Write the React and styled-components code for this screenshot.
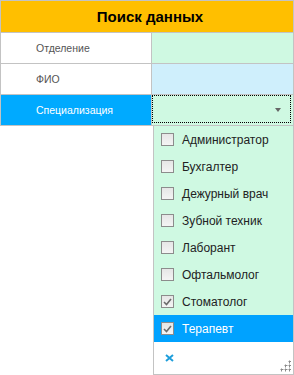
import React from "react";
import styled, { createGlobalStyle } from "styled-components";

const GlobalStyle = createGlobalStyle`
  html, body {
    margin: 0;
    padding: 0;
    background: #ffffff;
    font-family: "Liberation Sans", Arial, sans-serif;
  }
`;

const Page = styled.div`
  position: relative;
  width: 294px;
  height: 375px;
  overflow: hidden;
  background: #ffffff;
`;

const Form = styled.div`
  display: flex;
  flex-direction: column;
  border: 1px solid #c3c3c3;
  border-bottom: none;
`;

const Header = styled.div`
  height: 31px;
  display: flex;
  align-items: center;
  justify-content: center;
  padding-left: 6px;
  background: #ffbf00;
  border-bottom: 1px solid #c3c3c3;
  font-family: "Liberation Sans", Arial, sans-serif;
  font-weight: bold;
  font-size: 15px;
  color: #000;
`;

const Row = styled.div`
  display: grid;
  grid-template-columns: 150px 1px 1fr;
  height: 30px;
  border-bottom: 1px solid #c3c3c3;
`;

const Divider = styled.div`
  background: #c3c3c3;
`;

const Label = styled.div`
  display: flex;
  align-items: center;
  padding-left: 35px;
  font-size: 10.5px;
  color: ${(p) => (p.$active ? "#ffffff" : "#555555")};
  background: ${(p) => (p.$active ? "#00aaff" : "#ffffff")};
`;

const Field = styled.div`
  background: ${(p) => p.$bg};
  display: flex;
`;

const Focus = styled.div`
  flex: 1;
  margin: 0 2px 2px 0;
  border: 1px dotted #000;
  display: flex;
  align-items: center;
  justify-content: flex-end;
  padding-right: 9px;
`;

const Arrow = styled.div`
  width: 0;
  height: 0;
  border-left: 3.5px solid transparent;
  border-right: 3.5px solid transparent;
  border-top: 4px solid #666;
  margin-top: 1px;
`;

const Popup = styled.div`
  position: absolute;
  left: 153px;
  top: 125px;
  width: 141px;
  height: 250px;
  box-sizing: border-box;
  border: 1px solid #c3c3c3;
  background: #cff9e2;
  display: flex;
  flex-direction: column;
`;

const List = styled.div`
  display: flex;
  flex-direction: column;
`;

const Item = styled.div`
  height: 27px;
  display: flex;
  align-items: center;
  padding-left: 7px;
  gap: 8px;
  font-family: "Liberation Sans", Arial, sans-serif;
  font-size: 12px;
  color: ${(p) => (p.$selected ? "#ffffff" : "#222222")};
  background: ${(p) => (p.$selected ? "#00a2ff" : "transparent")};
`;

const Box = styled.div`
  width: 11px;
  height: 11px;
  border: 1px solid #8c8c8c;
  background: linear-gradient(#e6e6e6, #f4f4f4);
  display: flex;
  align-items: center;
  justify-content: center;
  flex-shrink: 0;
`;

const Footer = styled.div`
  flex: 1;
  background: #ffffff;
  position: relative;
  display: flex;
  align-items: center;
  padding-left: 11px;
`;

const Grip = styled.svg`
  position: absolute;
  right: 2px;
  bottom: 2px;
`;

const items = [
  ["Администратор", false],
  ["Бухгалтер", false],
  ["Дежурный врач", false],
  ["Зубной техник", false],
  ["Лаборант", false],
  ["Офтальмолог", false],
  ["Стоматолог", true],
  ["Терапевт", true],
];

const Check = () => (
  <svg width="9" height="8" viewBox="0 0 9 8">
    <path d="M1 4 L3.5 6.5 L8 1" stroke="#6b6b6b" strokeWidth="1.6" fill="none" />
  </svg>
);

const plus = (x, y) => (
  <path key={`${x}-${y}`} d={`M${x} ${y - 1}v3M${x - 1} ${y}h3`} stroke="#8a8a8a" strokeWidth="1" />
);

export default function App() {
  return (
    <Page>
      <GlobalStyle />
      <Form>
        <Header>Поиск данных</Header>
        <Row>
          <Label>Отделение</Label>
          <Divider />
          <Field $bg="#cff9e2" />
        </Row>
        <Row>
          <Label>ФИО</Label>
          <Divider />
          <Field $bg="#cfeffc" />
        </Row>
        <Row>
          <Label $active>Специализация</Label>
          <Divider />
          <Field $bg="#cff9e2">
            <Focus>
              <Arrow />
            </Focus>
          </Field>
        </Row>
      </Form>
      <Popup>
        <List>
          {items.map(([name, checked], i) => (
            <Item key={name} $selected={i === items.length - 1}>
              <Box>{checked && <Check />}</Box>
              {name}
            </Item>
          ))}
        </List>
        <Footer>
          <svg width="9" height="8" viewBox="0 0 9 8">
            <path d="M1 1 L8 7 M8 1 L1 7" stroke="#1e9edb" strokeWidth="2" />
          </svg>
          <Grip width="12" height="12" viewBox="0 0 12 12">
            {[plus(10.5, 1.5), plus(6.5, 5.5), plus(10.5, 5.5), plus(2.5, 9.5), plus(6.5, 9.5), plus(10.5, 9.5)]}
          </Grip>
        </Footer>
      </Popup>
    </Page>
  );
}
